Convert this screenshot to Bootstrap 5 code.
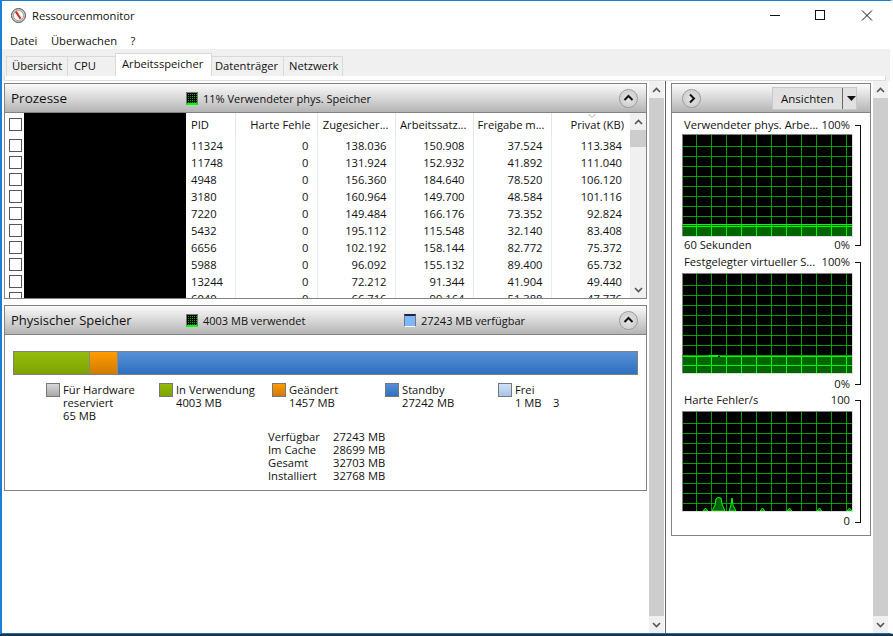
<!DOCTYPE html>
<html lang="de">
<head>
  <meta charset="UTF-8">
  <title>Ressourcenmonitor</title>
  <link href="https://cdn.jsdelivr.net/npm/bootstrap@5.3.3/dist/css/bootstrap.min.css" rel="stylesheet">
  <script src="https://cdn.jsdelivr.net/npm/bootstrap@5.3.3/dist/js/bootstrap.bundle.min.js"></script>
  <style>
    html, body { height: 100%; overflow: hidden; }
    body { font-family: "Open Sans", "Noto Sans", sans-serif; font-size: 11.2px; line-height: 13px; color: #111; background: #1e3344; }
    .win { height: 634px; background: #fff; border-top: 1px solid #1a7fd0; border-left: 2px solid #1a7fd0; border-right: 3px solid #fff; border-bottom: 1px solid #1a6fb0; display: flex; flex-direction: column; }
    .titlebar { height: 32px; padding: 0 0 3px 9px; }
    .titleicon { margin-right: 6px; }
    .capbtn { width: 46px; }
    .capbtn svg { display: block; }
    .menubar { height: 16px; padding: 0 0 1px 8px; gap: 13.5px; }
    .tabstrip { height: 32px; background: #f0f0f0; padding: 4px 4px 0 2px; }
    .tabline { height: 23px; margin-left: 2px; }
    .tabfoot { height: 5px; background: #fff; border: 1px solid #ddd; border-top: 0; }
    .wtab { height: 20px; margin-top: 3px; padding-top: 2px; background: #f0f0f0; border: 1px solid #d9d9d9; border-bottom: 0; border-left: 0; }
    .wtab.on { background: #fff; height: 23px; margin-top: 0; padding-top: 3px; border-left: 1px solid #d9d9d9; }
    .tab-a { width: 62px; padding-left: 5px; border-left: 1px solid #d9d9d9; }
    .tab-b { width: 47px; padding-left: 6px; border-right: 0; }
    .tab-c { width: 97px; padding-left: 6px; }
    .tab-d { width: 72px; padding-left: 3px; }
    .tab-e { width: 59px; padding-left: 5px; }
    .wbody { flex: 1; min-height: 0; padding-left: 2px; }
    .leftcol { width: 643px; padding-top: 2px; }
    .scrl { width: 15px; margin-left: 2px; background: #cdcdcd; display: flex; flex-direction: column; justify-content: space-between; }
    .scrl .arr { height: 17px; background: #f0f0f0; display: flex; align-items: center; justify-content: center; }
    .vsep { width: 1px; background: #666; margin: 0 5px 0 1px; }
    .pane { border: 1px solid #828282; background: #fff; }
    .phys { margin-top: 6px; }
    .panehead { height: 29px; background: linear-gradient(#fbfbfb, #e6e6e6 30%, #b4b4b4); border-bottom: 1px solid #828282; font-size: 13px; padding-left: 6px; }
    .prozlabel { font-size: 13.5px; width: 175px; }
    .physlabel { width: 175px; }
    .headstat { font-size: 11px; display: flex; align-items: center; gap: 5px; }
    .stat2 { width: 218px; }
    .chip { width: 12px; height: 13px; border: 1px solid #777; border-bottom: 2px solid #0f0; background-color: #0a0; background-image: linear-gradient(#000 1px, transparent 1px), linear-gradient(90deg, #000 1px, transparent 1px); background-size: 2px 2px; }
    .chip.blue { background: #7db7ff; border: 1px solid #777; border-bottom-color: #fff; border-top: 2px solid #224; }
    .roundbtn { width: 19px; height: 19px; border-radius: 50%; border: 1px solid #999; background: radial-gradient(#e8e8e8, #d2d2d2 60%, #f4f4f4); display: flex; align-items: center; justify-content: center; }
    .tablewrap { height: 185px; overflow: hidden; }
    .proctable { table-layout: fixed; border-collapse: collapse; width: 625px; }
    .proctable .hdr th { font-weight: 400; height: 24px; padding: 5px 6px 0 0; text-align: right; vertical-align: top; border-right: 1px solid #e5e5e5; white-space: nowrap; position: relative; }
    .proctable td { height: 17px; padding: 0 8px 0 0; text-align: right; border-right: 1px solid #e3edf9; }
    .proctable .pid, .proctable .hdr .pid { text-align: left; padding-left: 5px; }
    .proctable .nob, .proctable .hdr .nob { border-right: 0; padding-right: 0; text-align: left; }
    .proctable .blk, .proctable .hdr .blk { background: #000; border: 0; padding: 0; }
    .cbx { display: block; width: 13px; height: 13px; border: 1px solid #555; background: #fff; margin-left: 4px; }
    .sorter { position: absolute; top: 1px; left: 36px; }
    .tscroll { width: 16px; background: #f0f0f0; }
    .tscroll .thumb { height: 17px; background: #cdcdcd; }
    .tscroll .arr { height: 17px; display: flex; align-items: center; justify-content: center; }
    .physbody { height: 155px; padding: 16px 8px 0 8px; }
    .membar { height: 24px; border: 1px solid #808080; display: flex; }
    .membar div { border-right: 1px solid #8a8a7a; }
    .seg-green { width: 76px; background: linear-gradient(#93bc0c, #7ea300); }
    .seg-orange { width: 28px; background: linear-gradient(#ff9c00, #cf7a00); }
    .seg-blue { flex: 1; background: linear-gradient(#5890d6, #2f6fc0); border: 0 !important; }
    .legend { padding-left: 33px; margin-top: 8px; position: relative; height: 47px; }
    .legitem { width: 113px; gap: 3px; }
    .swatch { width: 14px; height: 14px; border: 1px solid #777; flex-shrink: 0; }
    .sw-grey { background: linear-gradient(#d8d8d8, #a8a8a8); }
    .sw-green { background: linear-gradient(#93bc0c, #7ea300); }
    .sw-orange { background: linear-gradient(#ff9c00, #cf7a00); }
    .sw-blue { background: linear-gradient(#5890d6, #2f6fc0); }
    .sw-light { background: linear-gradient(#d3e2f6, #a5c3ea); }
    .strayb { position: absolute; left: 540px; top: 13px; }
    .statsgrid { margin-left: 255px; display: grid; grid-template-columns: 65px auto; line-height: 13px; }
    .rightcol { width: 200px; padding-top: 2px; }
    .viewbtn { width: 85px; height: 23px; background: #e1e1e1; border: 1px solid #c8c8c8; padding-left: 8px; margin-right: 13px; font-size: 11.5px; }
    .viewbtn .lbl { width: 62px; }
    .viewbtn .spl { width: 1px; height: 21px; background: #666; }
    .graphs { padding: 5px 0 0 10px; height: 422px; }
    .grouping { position: relative; width: 180px; }
    .g2 { margin-top: 2px; }
    .g3 { margin-top: 1px; }
    .grrow { padding: 0 12px 0 2px; height: 16px; line-height: 14px; }
    .rowtall { height: 18px; }
    .rowp1 { padding-top: 1px; }
    .rowp2 { padding-top: 2px; }
    .rowp3 { padding-top: 3px; }
    .bracket { position: absolute; top: 7px; bottom: 7px; right: 1px; width: 6px; border: 1px solid #111; border-left: 0; }
    .grgraph { display: block; width: 171px; shape-rendering: crispEdges; }
    .grgraph .spk { shape-rendering: auto; }
  </style>
</head>
<body>
  <div class="win">
    <div class="titlebar d-flex align-items-center">
      <svg class="titleicon" width="15" height="15" viewBox="0 0 15 15">
        <circle cx="7.5" cy="7.5" r="7" fill="#cfccc6" stroke="#555"/>
        <circle cx="7.5" cy="7.5" r="5" fill="#fbf8f2" stroke="#8a8a8a" stroke-width=".7"/>
        <path d="M4.8 3.6L9.6 10.8" stroke="#c62a22" stroke-width="2"/>
      </svg>
      <span>Ressourcenmonitor</span>
      <div class="ms-auto d-flex align-self-start">
        <div class="capbtn"><svg width="46" height="30" viewBox="0 0 46 30"><path d="M18 14.5H28" stroke="#111"/></svg></div>
        <div class="capbtn"><svg width="46" height="30" viewBox="0 0 46 30"><rect x="17.5" y="9.5" width="9" height="9" fill="none" stroke="#111"/></svg></div>
        <div class="capbtn"><svg width="46" height="30" viewBox="0 0 46 30"><path d="M18 9.5L28 19.5M28 9.5L18 19.5" stroke="#111"/></svg></div>
      </div>
    </div>
    <div class="menubar d-flex align-items-center"><span>Datei</span><span>Überwachen</span><span>?</span></div>
    <div class="tabstrip">
      <div class="tabline d-flex align-items-start">
        <div class="wtab tab-a">Übersicht</div>
        <div class="wtab tab-b">CPU</div>
        <div class="wtab tab-c on">Arbeitsspeicher</div>
        <div class="wtab tab-d">Datenträger</div>
        <div class="wtab tab-e">Netzwerk</div>
      </div>
      <div class="tabfoot"></div>
    </div>
    <div class="wbody d-flex">
      <div class="leftcol d-flex flex-column">
        <div class="pane">
          <div class="panehead d-flex align-items-center">
            <span class="prozlabel">Prozesse</span>
            <span class="headstat"><span class="chip"></span>11% Verwendeter phys. Speicher</span>
            <span class="roundbtn ms-auto me-2"><svg width="11" height="8" viewBox="0 0 11 8"><path d="M1.5 6L5.5 2L9.5 6" fill="none" stroke="#111" stroke-width="2"/></svg></span>
          </div>
          <div class="d-flex">
            <div class="tablewrap flex-grow-1">
              <table class="proctable">
                <colgroup><col style="width:19px"><col style="width:162px"><col style="width:49px"><col style="width:82px"><col style="width:78px"><col style="width:78px"><col style="width:78px"><col style="width:79px"></colgroup>
                <tbody id="procrows">
                  <tr class="hdr"><th class="nob"><span class="cbx"></span></th><th class="blk" rowspan="12"></th><th class="pid">PID</th><th>Harte Fehle</th><th>Zugesicher...</th><th>Arbeitssatz...</th><th>Freigabe m...</th><th class="border-0">Privat (KB)<svg class="sorter" width="8" height="4" viewBox="0 0 8 4"><path d="M.5 0L4 3.5L7.5 0" fill="none" stroke="#aaa"/></svg></th></tr>
                </tbody>
              </table>
            </div>
            <div class="tscroll d-flex flex-column">
              <div class="arr"><svg width="9" height="6" viewBox="0 0 9 6"><path d="M1 5L4.5 1.5L8 5" fill="none" stroke="#555" stroke-width="1.6"/></svg></div>
              <div class="thumb"></div>
              <div class="flex-grow-1"></div>
              <div class="arr"><svg width="9" height="6" viewBox="0 0 9 6"><path d="M1 1L4.5 4.5L8 1" fill="none" stroke="#555" stroke-width="1.6"/></svg></div>
            </div>
          </div>
        </div>
        <div class="pane phys">
          <div class="panehead d-flex align-items-center">
            <span class="physlabel">Physischer Speicher</span>
            <span class="headstat stat2"><span class="chip"></span>4003 MB verwendet</span>
            <span class="headstat"><span class="chip blue"></span>27243 MB verfügbar</span>
            <span class="roundbtn ms-auto me-2"><svg width="11" height="8" viewBox="0 0 11 8"><path d="M1.5 6L5.5 2L9.5 6" fill="none" stroke="#111" stroke-width="2"/></svg></span>
          </div>
          <div class="physbody">
            <div class="membar"><div class="seg-green"></div><div class="seg-orange"></div><div class="seg-blue"></div></div>
            <div class="legend d-flex">
              <div class="legitem d-flex"><span class="swatch sw-grey"></span><span>Für Hardware<br>reserviert<br>65 MB</span></div>
              <div class="legitem d-flex"><span class="swatch sw-green"></span><span>In Verwendung<br>4003 MB</span></div>
              <div class="legitem d-flex"><span class="swatch sw-orange"></span><span>Geändert<br>1457 MB</span></div>
              <div class="legitem d-flex"><span class="swatch sw-blue"></span><span>Standby<br>27242 MB</span></div>
              <div class="legitem d-flex"><span class="swatch sw-light"></span><span>Frei<br>1 MB</span></div>
              <span class="strayb">3</span>
            </div>
            <div class="statsgrid">
              <span>Verfügbar</span><span>27243 MB</span>
              <span>Im Cache</span><span>28699 MB</span>
              <span>Gesamt</span><span>32703 MB</span>
              <span>Installiert</span><span>32768 MB</span>
            </div>
          </div>
        </div>
      </div>
      <div class="scrl">
        <div class="arr"><svg width="9" height="6" viewBox="0 0 9 6"><path d="M1 5L4.5 1.5L8 5" fill="none" stroke="#555" stroke-width="1.6"/></svg></div>
        <div class="arr"><svg width="9" height="6" viewBox="0 0 9 6"><path d="M1 1L4.5 4.5L8 1" fill="none" stroke="#555" stroke-width="1.6"/></svg></div>
      </div>
      <div class="vsep"></div>
      <div class="rightcol">
        <div class="pane">
          <div class="panehead d-flex align-items-center">
            <span class="roundbtn ms-1"><svg width="8" height="11" viewBox="0 0 8 11"><path d="M2 1.5L6 5.5L2 9.5" fill="none" stroke="#111" stroke-width="2"/></svg></span>
            <span class="viewbtn d-flex align-items-center ms-auto"><span class="lbl">Ansichten</span><span class="spl"></span><svg class="ms-1" width="9" height="5" viewBox="0 0 9 5"><path d="M0 0H9L4.5 5Z" fill="#111"/></svg></span>
          </div>
          <div class="graphs" id="graphs"></div>
        </div>
      </div>
      <div class="scrl">
        <div class="arr"><svg width="9" height="6" viewBox="0 0 9 6"><path d="M1 5L4.5 1.5L8 5" fill="none" stroke="#555" stroke-width="1.6"/></svg></div>
        <div class="arr"><svg width="9" height="6" viewBox="0 0 9 6"><path d="M1 1L4.5 4.5L8 1" fill="none" stroke="#555" stroke-width="1.6"/></svg></div>
      </div>
    </div>
  </div>
  <script>
    const rows = [
      [11324, "138.036", "150.908", "37.524", "113.384"],
      [11748, "131.924", "152.932", "41.892", "111.040"],
      [4948, "156.360", "184.640", "78.520", "106.120"],
      [3180, "160.964", "149.700", "48.584", "101.116"],
      [7220, "149.484", "166.176", "73.352", "92.824"],
      [5432, "195.112", "115.548", "32.140", "83.408"],
      [6656, "102.192", "158.144", "82.772", "75.372"],
      [5988, "96.092", "155.132", "89.400", "65.732"],
      [13244, "72.212", "91.344", "41.904", "49.440"],
      [6040, "66.716", "99.164", "51.388", "47.776"]
    ];
    document.getElementById("procrows").insertAdjacentHTML("beforeend", rows.map(r =>
      `<tr><td class="nob"><span class="cbx"></span></td><td class="pid">${r[0]}</td><td>0</td><td>${r[1]}</td><td>${r[2]}</td><td>${r[3]}</td><td class="border-0">${r[4]}</td></tr>`
    ).join(""));

    const DARK = "#00a000", BRIGHT = "#00ff00";

    // h = svg height, top = where the filled part starts (or h if none)
    function graph(h, top, extra) {
      let s = `<rect width="171" height="${h}" fill="#000"/>`;
      if (top < h) s += `<rect x="1" y="${top}" width="169" height="${h - top}" fill="#006400"/>`;
      for (let x = 14; x < 170; x += 15) {
        s += `<rect x="${x}" y="1" width="1" height="${Math.min(top, h) - 1}" fill="${DARK}"/>`;
        if (top < h) s += `<rect x="${x}" y="${top}" width="1" height="${h - top}" fill="${BRIGHT}"/>`;
      }
      for (let y = 12; y < h - 2; y += 10) {
        s += `<rect x="1" y="${y}" width="169" height="1" fill="${y >= top ? BRIGHT : DARK}"/>`;
      }
      if (top < h) s += `<rect x="1" y="${top}" width="169" height="1" fill="${BRIGHT}"/>`;
      s += extra;
      s += `<rect width="171" height="1" fill="#808080"/><rect width="1" height="${h}" fill="#808080"/>`;
      s += `<rect y="${h - 1}" width="171" height="1" fill="#ddd"/><rect x="170" width="1" height="${h}" fill="#ddd"/>`;
      return `<svg class="grgraph" height="${h}" viewBox="0 0 171 ${h}">${s}</svg>`;
    }

    const blip = `<rect x="27" y="82" width="9" height="1" fill="${BRIGHT}"/><rect x="36" y="83" width="2" height="1" fill="#000"/>`;
    const spikes = `<path class="spk" d="M21 100L23.5 97L26 100ZM30 100L33 94L34 88L36 86.5L39 87L40 93L43 100ZM47 100L49 94L50 87L51 94L54 100ZM78 100L80.5 97L83 100ZM105 100L107.5 97L110 100ZM135 100L137.5 97L140 100ZM165 100L167.5 97L170 100Z" fill="#006400" stroke="${BRIGHT}"/>`;

    document.getElementById("graphs").innerHTML = `
      <div class="grouping">
        <div class="grrow d-flex justify-content-between"><span>Verwendeter phys. Arbe...</span><span>100%</span></div>
        ${graph(103, 90, "")}
        <div class="grrow rowp1 d-flex justify-content-between"><span>60 Sekunden</span><span>0%</span></div>
        <div class="bracket"></div>
      </div>
      <div class="grouping g2">
        <div class="grrow rowtall d-flex justify-content-between"><span>Festgelegter virtueller S...</span><span>100%</span></div>
        ${graph(101, 83, blip)}
        <div class="grrow rowtall rowp3 d-flex justify-content-end"><span>0%</span></div>
        <div class="bracket"></div>
      </div>
      <div class="grouping g3">
        <div class="grrow rowtall d-flex justify-content-between"><span>Harte Fehler/s</span><span>100</span></div>
        ${graph(101, 101, spikes)}
        <div class="grrow rowtall rowp2 d-flex justify-content-end"><span>0</span></div>
        <div class="bracket"></div>
      </div>`;
  </script>
</body>
</html>
